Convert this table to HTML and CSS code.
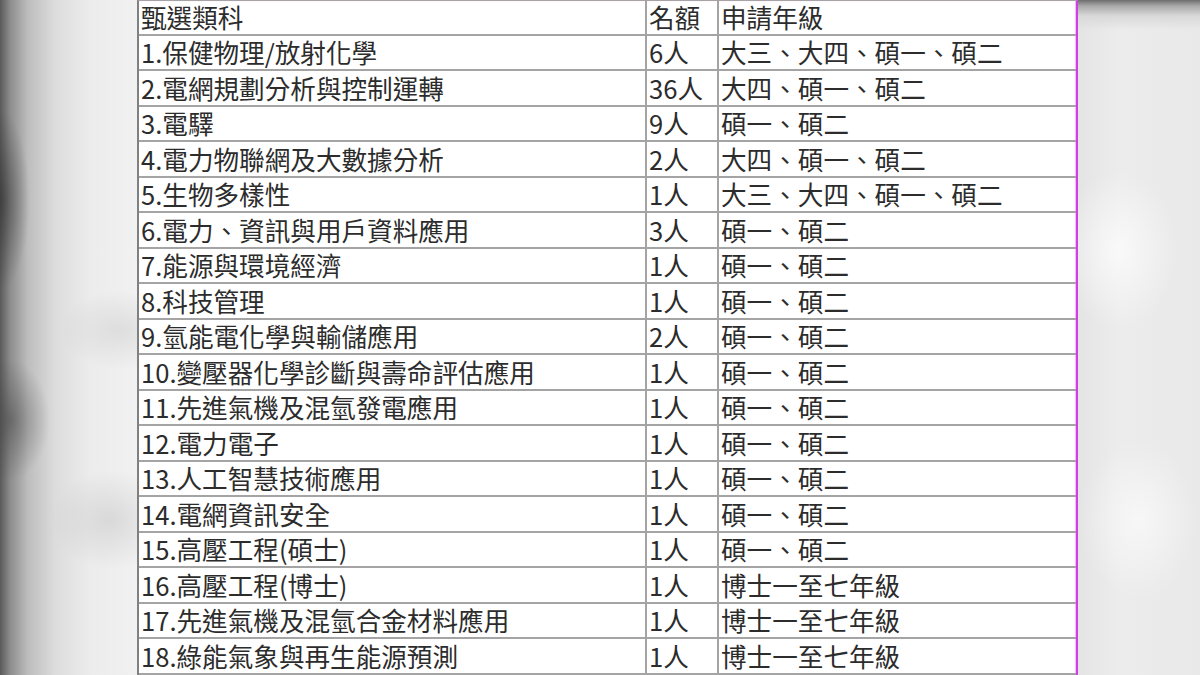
FILE: index.html
```html
<!DOCTYPE html>
<html lang="zh-Hant">
<head>
<meta charset="utf-8">
<title>甄選類科</title>
<link rel="stylesheet" href="styles.css">
</head>
<body>
<div class="stage">
  <div class="side side-left"></div>
  <div class="sheet" role="table">
    <div class="row" role="row"><div class="cell">甄選類科</div><div class="cell">名額</div><div class="cell">申請年級</div></div>
    <div class="row" role="row"><div class="cell">1.保健物理/放射化學</div><div class="cell">6人</div><div class="cell">大三、大四、碩一、碩二</div></div>
    <div class="row" role="row"><div class="cell">2.電網規劃分析與控制運轉</div><div class="cell">36人</div><div class="cell">大四、碩一、碩二</div></div>
    <div class="row" role="row"><div class="cell">3.電驛</div><div class="cell">9人</div><div class="cell">碩一、碩二</div></div>
    <div class="row" role="row"><div class="cell">4.電力物聯網及大數據分析</div><div class="cell">2人</div><div class="cell">大四、碩一、碩二</div></div>
    <div class="row" role="row"><div class="cell">5.生物多樣性</div><div class="cell">1人</div><div class="cell">大三、大四、碩一、碩二</div></div>
    <div class="row" role="row"><div class="cell">6.電力、資訊與用戶資料應用</div><div class="cell">3人</div><div class="cell">碩一、碩二</div></div>
    <div class="row" role="row"><div class="cell">7.能源與環境經濟</div><div class="cell">1人</div><div class="cell">碩一、碩二</div></div>
    <div class="row" role="row"><div class="cell">8.科技管理</div><div class="cell">1人</div><div class="cell">碩一、碩二</div></div>
    <div class="row" role="row"><div class="cell">9.氫能電化學與輸儲應用</div><div class="cell">2人</div><div class="cell">碩一、碩二</div></div>
    <div class="row" role="row"><div class="cell">10.變壓器化學診斷與壽命評估應用</div><div class="cell">1人</div><div class="cell">碩一、碩二</div></div>
    <div class="row" role="row"><div class="cell">11.先進氣機及混氫發電應用</div><div class="cell">1人</div><div class="cell">碩一、碩二</div></div>
    <div class="row" role="row"><div class="cell">12.電力電子</div><div class="cell">1人</div><div class="cell">碩一、碩二</div></div>
    <div class="row" role="row"><div class="cell">13.人工智慧技術應用</div><div class="cell">1人</div><div class="cell">碩一、碩二</div></div>
    <div class="row" role="row"><div class="cell">14.電網資訊安全</div><div class="cell">1人</div><div class="cell">碩一、碩二</div></div>
    <div class="row" role="row"><div class="cell">15.高壓工程(碩士)</div><div class="cell">1人</div><div class="cell">碩一、碩二</div></div>
    <div class="row" role="row"><div class="cell">16.高壓工程(博士)</div><div class="cell">1人</div><div class="cell">博士一至七年級</div></div>
    <div class="row" role="row"><div class="cell">17.先進氣機及混氫合金材料應用</div><div class="cell">1人</div><div class="cell">博士一至七年級</div></div>
    <div class="row" role="row"><div class="cell">18.綠能氣象與再生能源預測</div><div class="cell">1人</div><div class="cell">博士一至七年級</div></div>
  </div>
  <div class="side side-right"></div>
</div>
</body>
</html>
```

FILE: styles.css
```css
html, body {
  margin: 0;
  padding: 0;
  width: 1200px;
  height: 675px;
  overflow: hidden;
  background: #ececec;
}

.stage {
  display: grid;
  grid-template-columns: 137px 941px 1fr;
  height: 675px;
}

.side-left {
  background:
    radial-gradient(ellipse 30px 90px at 0px 200px, rgba(40,40,40,0.55), rgba(40,40,40,0) 100%),
    radial-gradient(ellipse 40px 60px at 10px 420px, rgba(60,60,60,0.45), rgba(60,60,60,0) 100%),
    radial-gradient(ellipse 60px 40px at 120px 330px, rgba(140,140,140,0.18), rgba(140,140,140,0) 100%),
    radial-gradient(ellipse 60px 50px at 110px 520px, rgba(130,130,130,0.2), rgba(130,130,130,0) 100%),
    linear-gradient(to right, #5a5a5a 0px, #8c8c8c 10px, #bdbdbd 28px, #dcdcdc 55px, #ececec 90px, #f1f1f1 137px);
}

.side-right {
  background:
    linear-gradient(to bottom, #6d6d6d 0px, #a9a9a9 6px, #d9d9d9 16px, rgba(230,230,230,0) 30px),
    radial-gradient(ellipse 60px 80px at 40px 250px, rgba(255,255,255,0.7), rgba(255,255,255,0) 100%),
    radial-gradient(ellipse 60px 80px at 60px 520px, rgba(255,255,255,0.6), rgba(255,255,255,0) 100%),
    linear-gradient(to right, #e4e4e4 0px, #ececec 40px, #e9e9e9 122px);
}

.sheet {
  background: #ffffff;
  overflow: hidden;
  box-sizing: border-box;
  border-top: 1px solid #a4a4a4;
  border-left: 2px solid #808080;
  border-right: 2px solid #cf3fe4;
  box-shadow: inset -1px 0 1px rgba(235,140,245,0.6);
  font-family: "Noto Sans CJK TC", "Noto Sans CJK SC", "Noto Sans", sans-serif;
  font-size: 25.6px;
  color: #2c2c2c;
}

.row {
  display: grid;
  grid-template-columns: 506px 72px 1fr;
  height: 35.5px;
  box-sizing: border-box;
  border-bottom: 2px solid #a4a4a4;
}

.row:first-child {
  height: 34.5px;
}

.cell {
  display: flex;
  align-items: center;
  padding: 1px 0 0 2px;
  line-height: 1.2;
  white-space: nowrap;
}

.cell + .cell {
  border-left: 2px solid #a4a4a4;
}
```
